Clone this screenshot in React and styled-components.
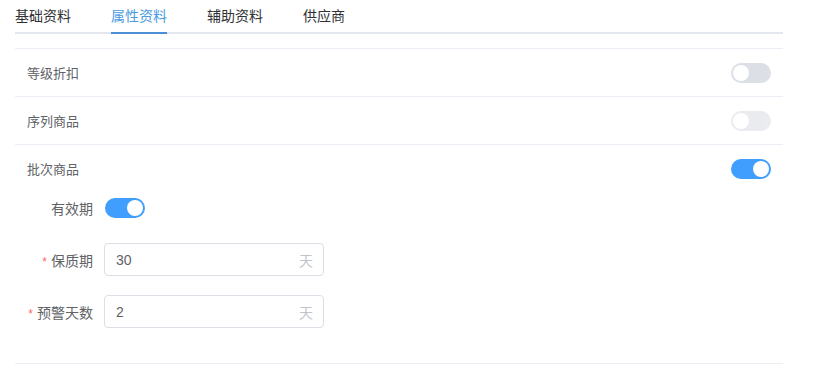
import React from "react";
import styled, { createGlobalStyle } from "styled-components";

const Global = createGlobalStyle`
  html, body { margin: 0; padding: 0; background: #fff; }
  body { font-family: "Liberation Sans", "Noto Sans CJK SC", sans-serif; }
  * { box-sizing: border-box; }
`;

const Page = styled.div`
  width: 814px;
  height: 378px;
  padding-left: 15px;
  overflow: hidden;
`;

const Panel = styled.div`
  width: 768px;
`;

const TabBar = styled.div`
  display: flex;
  height: 34px;
  border-bottom: 2px solid #e4e7ed;
  margin-bottom: 14px;
`;

const Tab = styled.div`
  position: relative;
  height: 32px;
  line-height: 32px;
  font-size: 14px;
  padding: 0 20px;
  color: ${(p) => (p.$active ? "#4a9be0" : "#303133")};
  &:first-child { padding-left: 0; }
  &::after {
    content: "";
    display: ${(p) => (p.$active ? "block" : "none")};
    position: absolute;
    left: 20px;
    right: 20px;
    bottom: -2px;
    height: 2px;
    background: #4a8fd6;
  }
`;

const Row = styled.div`
  display: flex;
  align-items: center;
  justify-content: space-between;
  height: 48px;
  border-top: 1px solid #ebeef5;
  padding: 0 12px;
  font-size: 13px;
  color: #606266;
`;

const Track = styled.span`
  position: relative;
  display: inline-block;
  width: 40px;
  height: 20px;
  border-radius: 10px;
  background: ${(p) => (p.$on ? "#409eff" : "#dcdfe6")};
  opacity: ${(p) => (p.$disabled ? 0.6 : 1)};
  flex: none;
  &::after {
    content: "";
    position: absolute;
    top: 2px;
    left: ${(p) => (p.$on ? "22px" : "2px")};
    width: 16px;
    height: 16px;
    border-radius: 50%;
    background: #fff;
  }
`;

const SubForm = styled.div`
  display: flex;
  flex-direction: column;
  padding: 6px 0 35px;
  border-bottom: 1px solid #ebeef5;
`;

const Item = styled.div`
  display: flex;
  align-items: center;
  height: ${(p) => p.$h}px;
  margin-bottom: ${(p) => p.$mb || 0}px;
`;

const Label = styled.label`
  width: 89px;
  padding-right: 11px;
  text-align: right;
  font-size: 14px;
  color: #606266;
  flex: none;
  white-space: nowrap;
`;

const Star = styled.span`
  color: #f56c6c;
  margin-right: 4px;
  font-size: 12px;
`;

const InputBox = styled.div`
  display: flex;
  align-items: center;
  justify-content: space-between;
  width: 220px;
  height: 33px;
  border: 1px solid #dcdfe6;
  border-radius: 4px;
  padding: 0 10px 0 11px;
  font-size: 14px;
  color: #606266;
`;

const Suffix = styled.span`
  color: #c0c4cc;
  font-size: 14px;
`;

export default function App() {
  return (
    <Page>
      <Global />
      <Panel>
        <TabBar>
          <Tab>基础资料</Tab>
          <Tab $active>属性资料</Tab>
          <Tab>辅助资料</Tab>
          <Tab>供应商</Tab>
        </TabBar>
        <Row>
          <span>等级折扣</span>
          <Track />
        </Row>
        <Row>
          <span>序列商品</span>
          <Track $disabled />
        </Row>
        <Row>
          <span>批次商品</span>
          <Track $on />
        </Row>
        <SubForm>
          <Item $h={20} $mb={25}>
            <Label>有效期</Label>
            <Track $on style={{ marginLeft: 1 }} />
          </Item>
          <Item $h={33} $mb={19}>
            <Label><Star>*</Star>保质期</Label>
            <InputBox>
              <span>30</span>
              <Suffix>天</Suffix>
            </InputBox>
          </Item>
          <Item $h={33}>
            <Label><Star>*</Star>预警天数</Label>
            <InputBox>
              <span>2</span>
              <Suffix>天</Suffix>
            </InputBox>
          </Item>
        </SubForm>
      </Panel>
    </Page>
  );
}
